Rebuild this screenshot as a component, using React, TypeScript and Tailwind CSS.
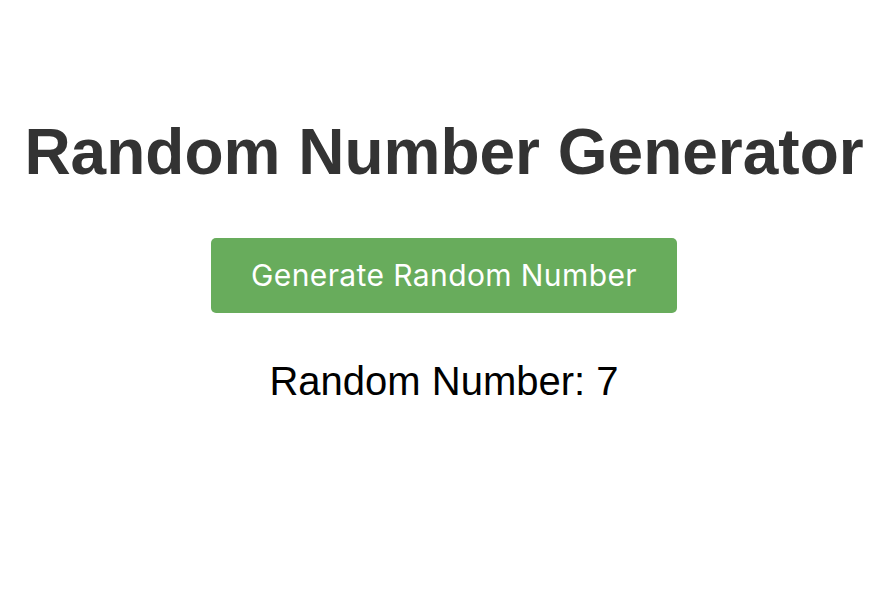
export default function App() {
  return (
    <div className="flex w-[888px] flex-col items-center pt-[116px] text-center" style={{ fontFamily: '"Liberation Sans", Arial, sans-serif' }}>
      <h1 className="text-[64px] font-bold leading-[1.15] text-[#333333]">Random Number Generator</h1>
      <button className="mt-[48px] h-[75px] w-[466px] rounded-[5px] bg-[#68ac5c] text-[30px] tracking-[0.4px] text-white" style={{ fontFamily: 'Inter, "Noto Sans", sans-serif' }}>
        Generate Random Number
      </button>
      <p className="mt-[38px] text-[40px] text-black">Random Number: 7</p>
    </div>
  );
}
